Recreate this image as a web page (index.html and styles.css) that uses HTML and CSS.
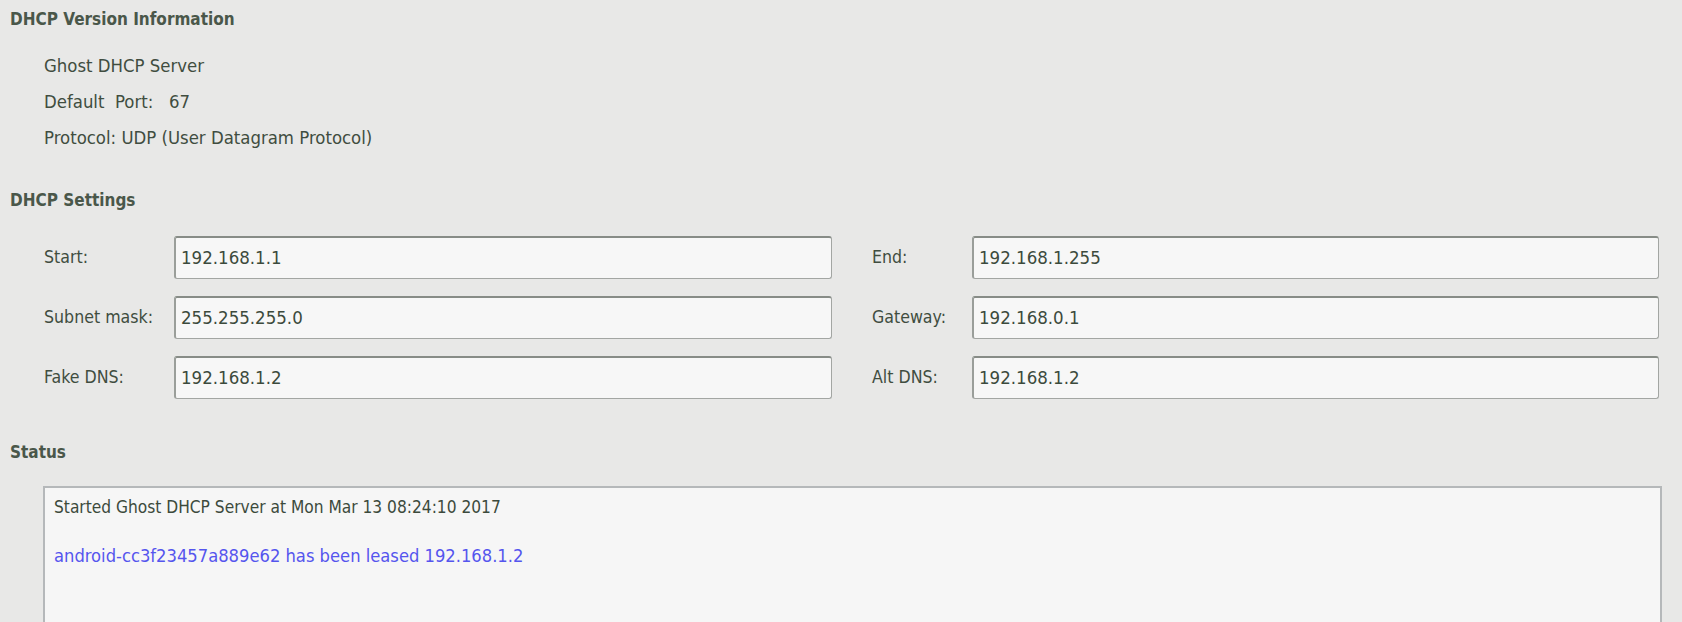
FILE: index.html
```html
<!DOCTYPE html>
<html>
<head>
<meta charset="utf-8">
<link rel="stylesheet" href="styles.css">
</head>
<body>
<div class="page">
  <h2 class="title t1">DHCP Version Information</h2>
  <div class="info">
    <div class="info-line">Ghost DHCP Server</div>
    <div class="info-line">Default&nbsp; Port: &nbsp; 67</div>
    <div class="info-line">Protocol: UDP (User Datagram Protocol)</div>
  </div>
  <h2 class="title t2">DHCP Settings</h2>
  <div class="settings">
    <label class="lbl">Start:</label>
    <div class="field">192.168.1.1</div>
    <label class="lbl lbl2">End:</label>
    <div class="field">192.168.1.255</div>
    <label class="lbl">Subnet mask:</label>
    <div class="field">255.255.255.0</div>
    <label class="lbl lbl2">Gateway:</label>
    <div class="field">192.168.0.1</div>
    <label class="lbl">Fake DNS:</label>
    <div class="field">192.168.1.2</div>
    <label class="lbl lbl2">Alt DNS:</label>
    <div class="field">192.168.1.2</div>
  </div>
  <h2 class="title t3">Status</h2>
  <div class="status">
    <div class="log">Started Ghost DHCP Server at Mon Mar 13 08:24:10 2017</div>
    <div class="log lease">android-cc3f23457a889e62 has been leased 192.168.1.2</div>
  </div>
</div>
</body>
</html>
```
FILE: styles.css
```css
html, body {
  margin: 0;
  padding: 0;
  background: #e8e8e7;
  height: 100%;
  overflow: hidden;
}
body {
  font-family: "DejaVu Sans Condensed", "DejaVu Sans", sans-serif;
  font-size: 17px;
  color: #404d40;
}
.page {
  height: 100%;
  box-sizing: border-box;
  padding: 0 0 0 10px;
  display: flex;
  flex-direction: column;
}
.title {
  margin: 0;
  font-size: 17px;
  font-weight: bold;
  color: #4a574a;
  line-height: 20px;
}
.t1 { padding-top: 9px; }
.t2 { padding-top: 34px; }
.t3 { padding-top: 43px; }
.info {
  padding: 19px 0 0 34px;
  font-size: 18.4px;
}
.info-line {
  height: 36px;
  line-height: 36px;
}
.settings {
  display: grid;
  grid-template-columns: 130px 658px 140px 687px;
  grid-auto-rows: 43px;
  row-gap: 17px;
  margin: 26px 0 0 34px;
  align-items: center;
}
.lbl {
  line-height: 43px;
  font-size: 17.6px;
}
.lbl2 {
  padding-left: 40px;
}
.field {
  height: 43px;
  box-sizing: border-box;
  background: #f7f7f7;
  border: 1px solid #a3a6a3;
  border-top: 2px solid #878c87;
  border-left: 2px solid #9a9e9a;
  border-radius: 3px;
  padding-left: 5px;
  line-height: 40px;
  font-size: 18.5px;
  color: #3c4a3c;
}
.status {
  flex: 1;
  margin: 24px 0 0 33px;
  width: 1619px;
  box-sizing: border-box;
  background: #f6f6f6;
  border: 2px solid #b5b8ba;
  border-bottom: none;
  padding: 9px 0 0 9px;
}
.log {
  line-height: 20px;
  font-size: 17.2px;
  color: #3c4a3c;
}
.lease {
  margin-top: 29px;
  font-size: 18.2px;
  color: #5555ee;
}
```
